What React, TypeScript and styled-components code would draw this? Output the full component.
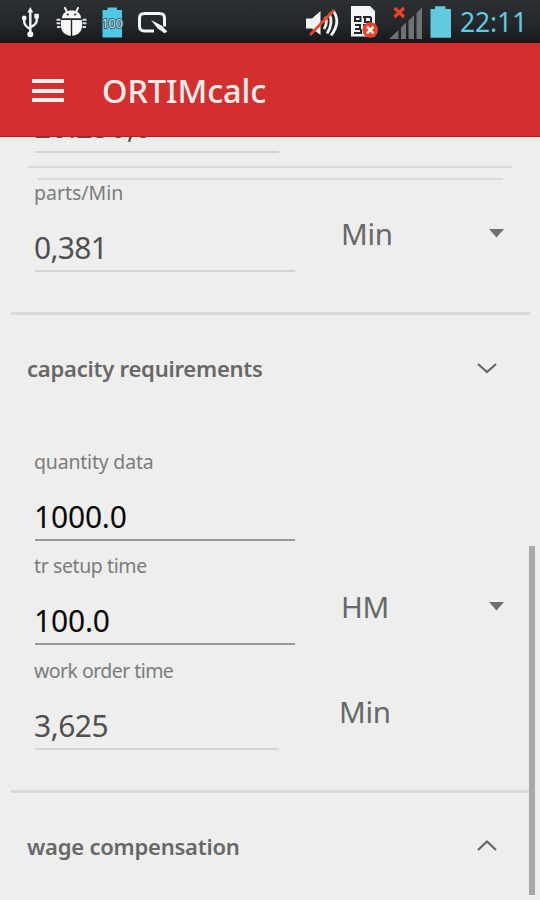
import React from "react";
import styled, { createGlobalStyle } from "styled-components";

const GlobalStyle = createGlobalStyle`
  body { margin: 0; background: #eeeeee; }
  * { box-sizing: border-box; }
`;

const Screen = styled.div`
  position: relative;
  width: 540px;
  height: 900px;
  display: flex;
  flex-direction: column;
  overflow: hidden;
  background: #eeeeee;
  font-family: "Noto Sans", sans-serif;
`;

const StatusBar = styled.div`
  height: 43px;
  flex: none;
  display: flex;
  justify-content: space-between;
  background: linear-gradient(#2c3033, #23272a 60%, #191b1d 92%, #241314);
`;

const StatusIcons = styled.svg`
  display: block;
  height: 43px;
  flex: none;
`;

const StatusRight = styled.div`
  display: flex;
`;

const Clock = styled.time`
  width: 80px;
  font-size: 26.5px;
  line-height: 44px;
  letter-spacing: -0.1px;
  color: #62c9e2;
  white-space: nowrap;
`;

const AppBar = styled.header`
  height: 94px;
  flex: none;
  display: flex;
  align-items: center;
  padding: 0 0 0 32px;
  background: #d32f2f;
  border-bottom: 1px solid #bd1c1c;
`;

const MenuButton = styled.div`
  width: 32px;
  height: 23px;
  margin-top: 2px;
  display: flex;
  flex-direction: column;
  justify-content: space-between;
`;

const MenuLine = styled.span`
  height: 4px;
  background: #fff0ee;
`;

const Title = styled.h1`
  margin: 3px 0 0 38px;
  font-size: 32.5px;
  font-weight: 500;
  line-height: 48px;
  letter-spacing: -0.1px;
  color: #fff0ee;
`;

const Content = styled.main`
  flex: 1;
  min-height: 0;
  overflow: hidden;
  display: flex;
  flex-direction: column;
`;

const Rule = styled.div<{ $left: number; $right: number; $top?: number; $h?: number }>`
  flex: none;
  height: ${(p) => p.$h ?? 2}px;
  margin: ${(p) => p.$top ?? 0}px ${(p) => p.$right}px 0 ${(p) => p.$left}px;
  background: #dadada;
`;

const Row = styled.div<{ $top: number }>`
  flex: none;
  display: grid;
  grid-template-columns: 305px 1fr;
  height: 94px;
  margin-top: ${(p) => p.$top}px;
  padding-left: 35px;
`;

const Field = styled.div<{ $width: number; $editable?: boolean }>`
  width: ${(p) => p.$width}px;
  height: 94px;
  padding-top: 1px;
  border-bottom: 2px solid ${(p) => (p.$editable ? "#999999" : "#d3d3d3")};
  color: ${(p) => (p.$editable ? "#080808" : "#505050")};
`;

const Label = styled.div<{ $spacing: number }>`
  height: 28px;
  margin: 0 0 21px -1px;
  font-size: 19.5px;
  line-height: 28px;
  letter-spacing: ${(p) => p.$spacing}px;
  color: #7c7c7c;
  white-space: nowrap;
`;

const Value = styled.div<{ $spacing?: number }>`
  height: 40px;
  margin-left: -1px;
  font-size: 30px;
  line-height: 40px;
  letter-spacing: ${(p) => p.$spacing ?? -0.2}px;
`;

const ClippedField = styled.div`
  flex: none;
  width: 244px;
  height: 46px;
  margin: -30px 0 0 35px;
  border-bottom: 2px solid #d3d3d3;
  color: #505050;
`;

const Unit = styled.div<{ $shift?: number }>`
  display: flex;
  justify-content: space-between;
  height: 40px;
  margin-top: 36px;
  margin-left: ${(p) => p.$shift ?? 1}px;
  padding-right: 36px;
  font-size: 29.5px;
  line-height: 40px;
  letter-spacing: -0.3px;
  color: #686868;
`;

const Caret = styled.svg`
  width: 15px;
  height: 9px;
  margin-top: 15px;
`;

const SectionHeader = styled.div<{ $top: number }>`
  flex: none;
  display: flex;
  justify-content: space-between;
  height: 40px;
  margin-top: ${(p) => p.$top}px;
  padding: 0 42px 0 27px;
`;

const SectionTitle = styled.h2`
  margin: 0;
  font-size: 22px;
  line-height: 40px;
  font-weight: 600;
  letter-spacing: -0.22px;
  color: #686868;
`;

const Chevron = styled.svg`
  width: 22px;
  height: 14px;
  margin-top: 13px;
`;

const Scrollbar = styled.div`
  position: absolute;
  right: 5px;
  top: 546px;
  width: 6px;
  height: 349px;
  background: #a9a9a9;
`;

function LeftStatus() {
  return (
    <StatusIcons width="180" viewBox="0 0 180 43">
      <g stroke="#f4f4f4" fill="none" strokeWidth="2.4">
        <path d="M30.3 11V34M24.2 19V22Q24.5 26 30.3 29M36.7 17V21Q36 25 30.3 27" />
      </g>
      <g fill="#f4f4f4">
        <path d="M30.3 7L33.3 12.5H27.3Z" />
        <circle cx="30.3" cy="34.2" r="3" />
        <circle cx="24.2" cy="18" r="2.4" />
        <rect x="34.3" y="13.8" width="4.6" height="4.6" />
      </g>
      <path d="M65 8L67 12M78 8L76 12" stroke="#f7f7f7" strokeWidth="2" strokeLinecap="round" />
      <path d="M62 18.3C62 13 66.5 10.4 71.5 10.4S81 13 81 18.3Z" fill="#f7f7f7" />
      <path d="M61 20H70.8V35.8C65 35.3 61 31.5 61 26ZM72.2 20H82V26C82 31.5 78 35.3 72.2 35.8Z" fill="#f7f7f7" />
      <path d="M56.5 19.8H60.5M56.5 23.3H60.5M57 27H60.5M82.5 19.8H86.5M82.5 23.3H86.5M82.5 27H86" fill="none" stroke="#dddddd" strokeWidth="2" />
      <circle cx="67.8" cy="14.5" r="1.1" fill="#25292c" />
      <circle cx="75.2" cy="14.5" r="1.1" fill="#25292c" />
      <path d="M102.5 10H107.5V7.5H117V10H122V37.5H102.5Z" fill="#4fc8e5" />
      <text x="101.5" y="27.5" fontSize="13" fontFamily="Noto Sans, sans-serif" fill="#b4e6ee" stroke="#3d5c66" strokeWidth="2" paintOrder="stroke" textLength="21.5">100</text>
      <path d="M154 31H144.5Q139.5 31 139.5 26V18Q139.5 13.5 144.5 13.5H159.5Q164.5 13.5 164.5 18V26.5" fill="none" stroke="#f4f4f4" strokeWidth="3" />
      <path d="M151 20L161.5 25.5L167.3 31.5L164.5 33.2L157.5 28.3Z" fill="#f4f4f4" />
    </StatusIcons>
  );
}

function RightStatus() {
  return (
    <StatusIcons width="160" viewBox="299 0 160 43">
      <path d="M305 18.5H311L319.5 11V35L311 28.5H305Z" fill="#f4f4f4" />
      <path d="M324 17Q327 23 323 29M328 13.5Q333 23 326 33.5M332 10.5Q340.5 22 330 35.5" fill="none" stroke="#f4f4f4" strokeWidth="2.8" />
      <path d="M309 35L333 10" stroke="#f2442b" strokeWidth="2.6" />
      <path d="M350 6H369L374 11V36.5H350Z" fill="#f7f7f7" />
      <path d="M354 17H359.5V21H354ZM362 17H370M364 17V22H370V17M354 25H359V29H354M362 25H368M354 33H360V29M354 32V34" fill="none" stroke="#242729" strokeWidth="2" />
      <circle cx="369.3" cy="30" r="7.8" fill="#ef4028" />
      <path d="M366 26.7L372.6 33.3M372.6 26.7L366 33.3" stroke="#fff" strokeWidth="2.4" />
      <path d="M388 39L397.5 30V39ZM400 27.5L405 22.5V39H400ZM407.5 20.5L413 15.5V39H407.5ZM415.5 13L421 7.5V39H415.5Z" fill="#707172" />
      <path d="M393.5 8L403 17M403 8L393.5 17" stroke="#ef4028" strokeWidth="3.2" />
      <path d="M429.5 9H434V6.3H444.5V9H450V37.8H429.5Z" fill="#63c9e1" />
    </StatusIcons>
  );
}

function DropCaret() {
  return (
    <Caret viewBox="0 0 15 9">
      <path d="M0 0H15L7.5 8.5Z" fill="#707070" />
    </Caret>
  );
}

function SectionArrow({ up }: { up?: boolean }) {
  return (
    <Chevron viewBox="0 0 22 14">
      <path d={up ? "M2 11L11 2.5L20 11" : "M2 3L11 11L20 3"} fill="none" stroke="#666" strokeWidth="2.2" />
    </Chevron>
  );
}

export default function App() {
  return (
    <Screen>
      <GlobalStyle />
      <StatusBar>
        <LeftStatus />
        <StatusRight>
          <RightStatus />
          <Clock>22:11</Clock>
        </StatusRight>
      </StatusBar>
      <AppBar>
        <MenuButton>
          <MenuLine />
          <MenuLine />
          <MenuLine />
        </MenuButton>
        <Title>ORTIMcalc</Title>
      </AppBar>
      <Content>
        <ClippedField>
          <Value>20.250,0</Value>
        </ClippedField>
        <Rule $left={28} $right={28} $top={13} />
        <Rule $left={38} $right={37} $top={10} />
        <Row $top={-2}>
          <Field $width={260}>
            <Label $spacing={0}>parts/Min</Label>
            <Value $spacing={-0.7}>0,381</Value>
          </Field>
          <Unit>
            Min
            <DropCaret />
          </Unit>
        </Row>
        <Rule $left={11} $right={10} $top={40} $h={3} />
        <SectionHeader $top={33}>
          <SectionTitle>capacity requirements</SectionTitle>
          <SectionArrow />
        </SectionHeader>
        <Row $top={59}>
          <Field $width={260} $editable>
            <Label $spacing={-0.2}>quantity data</Label>
            <Value>1000.0</Value>
          </Field>
        </Row>
        <Row $top={10}>
          <Field $width={260} $editable>
            <Label $spacing={-0.4}>tr setup time</Label>
            <Value>100.0</Value>
          </Field>
          <Unit>
            HM
            <DropCaret />
          </Unit>
        </Row>
        <Row $top={11}>
          <Field $width={244}>
            <Label $spacing={-0.55}>work order time</Label>
            <Value $spacing={-0.5}>3,625</Value>
          </Field>
          <Unit $shift={-1}>Min</Unit>
        </Row>
        <Rule $left={11} $right={10} $top={40} $h={3} />
        <SectionHeader $top={33}>
          <SectionTitle>wage compensation</SectionTitle>
          <SectionArrow up />
        </SectionHeader>
      </Content>
      <Scrollbar />
    </Screen>
  );
}
